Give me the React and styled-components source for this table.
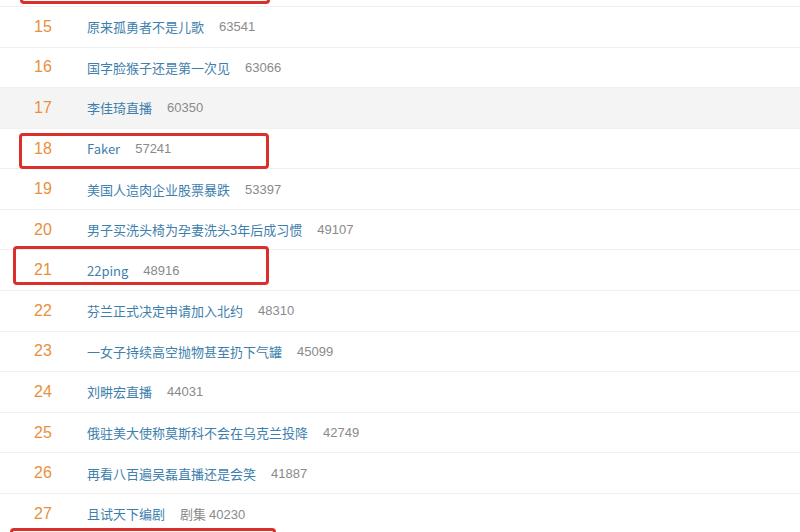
import React from "react";
import styled, { createGlobalStyle } from "styled-components";

const Global = createGlobalStyle`
  html, body { margin: 0; padding: 0; background: #fff; }
  body { width: 800px; height: 532px; overflow: hidden; }
`;

const Page = styled.div`
  width: 800px;
  height: 532px;
  overflow: hidden;
  background: #fff;
`;

const List = styled.ul`
  list-style: none;
  margin: -33.6px 0 0;
  padding: 0;
`;

const Row = styled.li`
  position: relative;
  display: flex;
  align-items: center;
  height: 40.58px;
  box-sizing: border-box;
  border-bottom: 1px solid #f0f0f0;
  background: ${(p) => (p.$active ? "#f4f4f4" : "#fff")};
`;

const Rank = styled.span`
  width: 53px;
  padding-left: 34px;
  flex: none;
  font-family: "Liberation Sans", Arial, sans-serif;
  font-size: 16px;
  color: #e98f3b;
`;

const Title = styled.span`
  font-family: "Noto Sans CJK SC", "Liberation Sans", sans-serif;
  font-size: 13px;
  color: #3d80ad;
`;

const Count = styled.span`
  margin-left: 15px;
  font-family: "Liberation Sans", "Noto Sans CJK SC", sans-serif;
  font-size: 13px;
  color: #8a8a8a;
`;

const Tag = styled.span`
  font-family: "Noto Sans CJK SC", sans-serif;
  margin-right: 3px;
`;

/* red annotation frame drawn over a row */
const Mark = styled.div`
  position: absolute;
  left: ${(p) => p.$m.left}px;
  top: ${(p) => p.$m.top}px;
  width: ${(p) => p.$m.width}px;
  height: ${(p) => p.$m.height}px;
  border: 3px solid #d9302c;
  border-radius: 4px;
  box-sizing: border-box;
  pointer-events: none;
`;

const rows = [
  { n: 14, t: "", c: "", mark: { left: 20, top: 3.6, width: 250, height: 34 } },
  { n: 15, t: "原来孤勇者不是儿歌", c: "63541" },
  { n: 16, t: "国字脸猴子还是第一次见", c: "63066" },
  { n: 17, t: "李佳琦直播", c: "60350", active: true },
  { n: 18, t: "Faker", c: "57241", mark: { left: 19, top: 4.5, width: 250, height: 36 } },
  { n: 19, t: "美国人造肉企业股票暴跌", c: "53397" },
  { n: 20, t: "男子买洗头椅为孕妻洗头3年后成习惯", c: "49107" },
  { n: 21, t: "22ping", c: "48916", mark: { left: 13, top: -4.5, width: 256, height: 39 } },
  { n: 22, t: "芬兰正式决定申请加入北约", c: "48310" },
  { n: 23, t: "一女子持续高空抛物甚至扔下气罐", c: "45099" },
  { n: 24, t: "刘畊宏直播", c: "44031" },
  { n: 25, t: "俄驻美大使称莫斯科不会在乌克兰投降", c: "42749" },
  { n: 26, t: "再看八百遍吴磊直播还是会笑", c: "41887" },
  { n: 27, t: "且试天下编剧", c: "40230", tag: "剧集", mark: { left: 10, top: 34, width: 266, height: 36 } },
];

export default function App() {
  return (
    <Page>
      <Global />
      <List>
        {rows.map((r) => (
          <Row key={r.n} $active={r.active}>
            <Rank>{r.n === 14 ? "" : r.n}</Rank>
            <Title>{r.t}</Title>
            {r.c && (
              <Count>
                {r.tag && <Tag>{r.tag}</Tag>}
                {r.c}
              </Count>
            )}
            {r.mark && <Mark $m={r.mark} />}
          </Row>
        ))}
      </List>
    </Page>
  );
}
